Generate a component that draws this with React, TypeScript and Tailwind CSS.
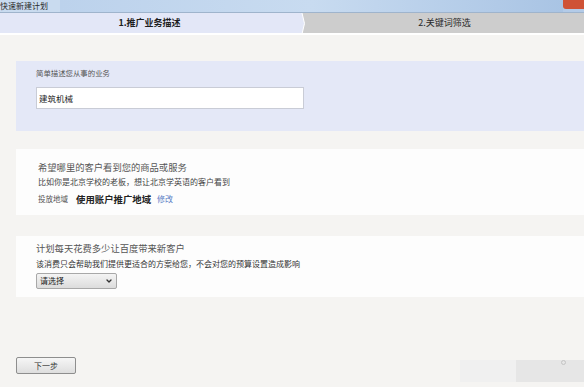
import { ChevronDown } from "lucide-react";

const cjk = "font-['Noto_Sans_CJK_SC','Noto_Sans',sans-serif]";

function TitleBar() {
  return (
    <div className="grid h-[12px] w-[584px] shrink-0 grid-cols-[60px_1fr_21px] overflow-hidden bg-[#b3cbe8]">
      <div className="bg-[#c9dbef] text-[8px] leading-[11px] text-[#2a2a2a]">快速新建计划</div>
      <div className="bg-linear-to-r from-[#bcd2ec] via-[#c8dbf0] to-[#a9c4e4]" />
      <div className="h-[9px] rounded-bl-[3px] bg-[#cf5236]" />
    </div>
  );
}

function Steps() {
  return (
    <div className="flex h-[21px] border-t border-[#9fb4cc]">
      <div className="flex w-[297px] items-center justify-center bg-[#e3e7f7] pl-[2px]">
        <span className="text-[9px] font-bold text-[#1e1e1e]">1.推广业务描述</span>
      </div>
      <svg width="8" height="21" viewBox="0 0 8 21" className="shrink-0 bg-[#cdcdcd]">
        <polygon points="0,0 5,0 7.5,10.5 5,21 0,21" fill="#e3e7f7" />
        <polyline points="5,0 7.5,10.5 5,21" fill="none" stroke="#ffffff" strokeWidth="1" />
      </svg>
      <div className="flex flex-1 items-center justify-center bg-[#cdcdcd]">
        <span className="text-[9px] text-[#2a2a2a]">2.关键词筛选</span>
      </div>
    </div>
  );
}

export default function App() {
  return (
    <div className={`relative flex h-[387px] w-[584px] flex-col overflow-hidden bg-[#f5f4f2] ${cjk}`}>
      <TitleBar />
      <Steps />
      <div className="h-[2px] bg-white" />

      <div className="flex flex-1 flex-col pl-[16px]">
        {/* 业务描述 */}
        <section className="mt-[26px] h-[70px] bg-[#e4e8f7] pl-[20px] pt-[7px]">
          <p className="text-[7.4px] leading-[10px] text-[#555]">简单描述您从事的业务</p>
          <div className="mt-[9px] flex h-[22px] w-[268px] items-center border border-[#c9ccd6] bg-white pl-[2px]">
            <span className="text-[8.5px] text-[#222]">建筑机械</span>
          </div>
        </section>

        {/* 推广地域 */}
        <section className="mt-[18px] h-[66px] bg-[#fdfdfd] pl-[22px] pt-[13px]">
          <p className="text-[9.3px] leading-[10px] text-[#555]">希望哪里的客户看到您的商品或服务</p>
          <p className="mt-[5px] text-[8px] leading-[10px] text-[#444]">比如你是北京学校的老板，想让北京学英语的客户看到</p>
          <div className="mt-[7px] flex items-center leading-[10px]">
            <span className="text-[7.5px] text-[#555]">投放地域</span>
            <span className="ml-[8px] text-[9.4px] font-bold text-[#222]">使用账户推广地域</span>
            <span className="ml-[6px] text-[8px] text-[#5b80c6]">修改</span>
          </div>
        </section>

        {/* 预算 */}
        <section className="mt-[21px] h-[61px] bg-[#fdfdfd] pl-[20px] pt-[7px]">
          <p className="text-[9.3px] leading-[10px] text-[#555]">计划每天花费多少让百度带来新客户</p>
          <p className="mt-[6px] text-[8px] leading-[10px] text-[#333]">该消费只会帮助我们提供更适合的方案给您，不会对您的预算设置造成影响</p>
          <div className="mt-[4px] flex h-[16px] w-[81px] items-center justify-between rounded-[2px] border border-[#a8a8a8] bg-[#e8e8e8] bg-linear-to-b from-[#f4f4f4] to-[#dcdcdc] pl-[3px] pr-[3px]">
            <span className="text-[8px] text-[#222]">请选择</span>
            <ChevronDown size={8} strokeWidth={4} className="text-[#333]" />
          </div>
        </section>

        <div className="mt-[60px]">
          <button className="flex h-[17px] w-[60px] items-center justify-center rounded-[2px] border border-[#8e8e8e] bg-[#ebebeb] bg-linear-to-b from-[#f6f6f6] to-[#dedede] text-[8px] text-[#333]">
            下一步
          </button>
        </div>
      </div>

      {/* faint watermark remnant, bottom right */}
      <div className="absolute bottom-[5px] right-0 flex h-[22px] w-[124px]">
        <div className="w-[56px] bg-[#f0f0f0]" />
        <div className="flex-1 bg-[#e6e6e6]" />
      </div>
      <div className="absolute right-[18px] top-[360px] h-[5px] w-[5px] rounded-full border border-[#c4c4c4]" />
    </div>
  );
}
